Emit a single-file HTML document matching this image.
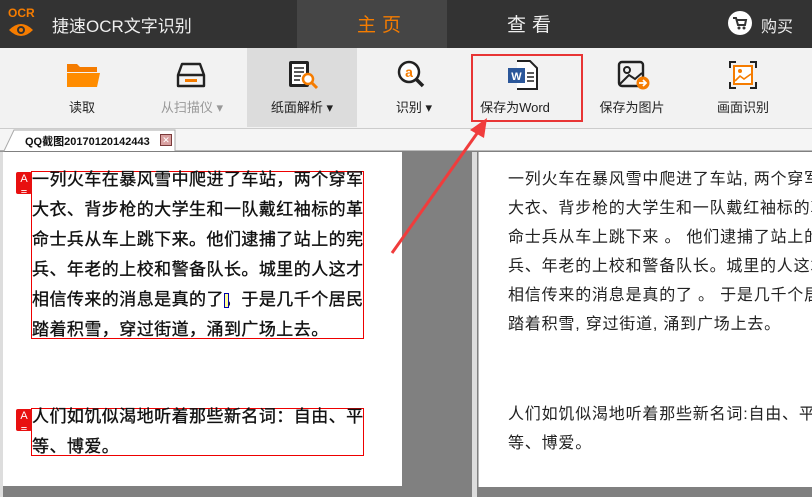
<!DOCTYPE html>
<html><head><meta charset="utf-8"><style>
*{margin:0;padding:0;box-sizing:border-box}
body{width:812px;height:497px;overflow:hidden;background:#808080;font-family:"Liberation Sans","Noto Sans CJK SC",sans-serif;position:relative}
.a{position:absolute}
.top{left:0;top:0;width:812px;height:48px;background:#333}
.lbl{font-size:13px;color:#222;text-align:center;width:110px;white-space:nowrap}
.lt{font-size:17px;color:#111;line-height:30px;white-space:nowrap;letter-spacing:0.45px;-webkit-text-stroke:0.35px #111}
.rt{font-size:16px;color:#222;line-height:29px;white-space:nowrap;letter-spacing:0.8px}
.ai{width:16px;height:22px;background:#e81010;border-radius:2px;color:#fff;font-size:11px;text-align:center;line-height:14px}
</style></head><body>
<div class="a top"></div>
<div class="a" style="left:297px;top:0;width:150px;height:48px;background:#454545"></div>
<div class="a" style="left:8px;top:6px;color:#f57c00;font-size:12px;font-weight:bold">OCR</div>
<svg class="a" style="left:8px;top:22px" width="26" height="16" viewBox="0 0 26 16"><path d="M1 8Q13 -4 25 8Q13 20 1 8Z" fill="#f57c00"/><circle cx="13" cy="8" r="4" fill="#333"/><circle cx="13" cy="8" r="2" fill="#f57c00"/></svg>
<div class="a" style="left:52px;top:12px;color:#eee;font-size:17px">捷速OCR文字识别</div>
<div class="a" style="left:357px;top:10px;color:#f57c00;font-size:19px;letter-spacing:6px">主页</div>
<div class="a" style="left:507px;top:10px;color:#eee;font-size:19px;letter-spacing:6px">查看</div>
<div class="a" style="left:728px;top:11px;width:24px;height:24px;border-radius:50%;background:#fff"></div>
<svg class="a" style="left:732px;top:15px" width="16" height="16" viewBox="0 0 16 16"><path d="M1 3H4L6 10H13L14 5H5" stroke="#333" stroke-width="2" fill="none"/><circle cx="7" cy="13" r="1.5" fill="#333"/><circle cx="12" cy="13" r="1.5" fill="#333"/></svg>
<div class="a" style="left:761px;top:13px;color:#eee;font-size:16px">购买</div>

<div class="a" style="left:0;top:48px;width:812px;height:80px;background:#f2f2f2"></div>
<div class="a" style="left:247px;top:48px;width:110px;height:79px;background:#dcdcdc"></div>
<svg class="a" style="left:67px;top:62px" width="33" height="26" viewBox="0 0 33 26"><path d="M0 2H10L13 5H30V10H0Z" fill="#f57c00"/><path d="M0 11H33L30 25H0Z" fill="#ff8c00"/></svg>
<svg class="a" style="left:176px;top:62px" width="30" height="26" viewBox="0 0 30 26"><path d="M6 2H24L28 13V24H2V13Z M2 13H28" stroke="#222" stroke-width="2.4" fill="none" stroke-linejoin="round"/><rect x="9" y="17" width="12" height="3" fill="#f57c00"/></svg>
<svg class="a" style="left:288px;top:60px" width="32" height="30" viewBox="0 0 32 30"><rect x="1" y="1" width="20" height="26" rx="2" fill="#222"/><rect x="4" y="4" width="14" height="20" fill="#fff"/><path d="M6 8H16M6 12H16M6 16H13M6 20H12" stroke="#222" stroke-width="1.5"/><circle cx="20" cy="19" r="5" stroke="#f57c00" stroke-width="2.5" fill="#fff"/><path d="M24 23L29 28" stroke="#f57c00" stroke-width="3"/></svg>
<svg class="a" style="left:397px;top:60px" width="30" height="30" viewBox="0 0 30 30"><circle cx="12" cy="12" r="10" stroke="#222" stroke-width="2.5" fill="#fff"/><path d="M19 19L26 26" stroke="#222" stroke-width="3.5"/><text x="12" y="17" text-anchor="middle" font-size="14" font-weight="bold" fill="#f57c00" font-family="Liberation Sans">a</text></svg>
<svg class="a" style="left:507px;top:60px" width="32" height="30" viewBox="0 0 32 30"><path d="M10 1H23L30 8V29H10" stroke="#222" stroke-width="2" fill="#fff"/><path d="M20 13H27M20 17H27M20 21H27" stroke="#222" stroke-width="1.6"/><rect x="1" y="8" width="17" height="15" fill="#2b579a"/><text x="9.5" y="20" text-anchor="middle" font-size="11" font-weight="bold" fill="#fff" font-family="Liberation Sans">W</text></svg>
<svg class="a" style="left:617px;top:60px" width="34" height="30" viewBox="0 0 34 30"><rect x="2" y="2" width="24" height="24" rx="3" stroke="#222" stroke-width="2.4" fill="none"/><circle cx="10" cy="10" r="3" stroke="#222" stroke-width="2" fill="none"/><path d="M3 24L12 15L18 19L25 13" stroke="#222" stroke-width="2" fill="none"/><circle cx="26" cy="23" r="6.5" fill="#f57c00"/><path d="M22 23H29M26 20L29 23L26 26" stroke="#fff" stroke-width="1.8" fill="none"/></svg>
<svg class="a" style="left:729px;top:61px" width="28" height="28" viewBox="0 0 28 28"><path d="M1 7V1H7M21 1H27V7M27 21V27H21M7 27H1V21" stroke="#222" stroke-width="2" fill="none"/><rect x="5" y="5" width="18" height="18" stroke="#f57c00" stroke-width="2" fill="#fff"/><circle cx="11" cy="10" r="2" fill="#f57c00"/><path d="M6 20L11 15L15 18L22 13" stroke="#f57c00" stroke-width="1.6" fill="none"/></svg>
<div class="a lbl" style="left:27px;top:97px">读取</div>
<div class="a lbl" style="left:137px;top:97px;color:#999">从扫描仪 ▾</div>
<div class="a lbl" style="left:247px;top:97px">纸面解析 ▾</div>
<div class="a lbl" style="left:359px;top:97px">识别 ▾</div>
<div class="a lbl" style="left:460px;top:97px">保存为Word</div>
<div class="a lbl" style="left:577px;top:97px">保存为图片</div>
<div class="a lbl" style="left:688px;top:97px">画面识别</div>
<div class="a" style="left:471px;top:54px;width:112px;height:68px;border:2px solid #e83535"></div>

<div class="a" style="left:0;top:128px;width:812px;height:23px;background:#f5f5f5;border-top:1px solid #ccc;border-bottom:1px solid #bbb"></div>
<svg class="a" style="left:0;top:129px" width="180" height="23"><path d="M0 22H4L14 1H175V22" fill="#fff" stroke="#aaa"/></svg>
<div class="a" style="left:25px;top:133px;font-size:11px;font-weight:bold;color:#111">QQ截图20170120142443</div>
<div class="a" style="left:160px;top:134px;width:12px;height:12px;background:#d9a0a0;border:1px solid #7a3a3a;font-size:9px;line-height:10px;text-align:center;color:#fff">✕</div>

<div class="a" style="left:3px;top:152px;width:399px;height:334px;background:#fff"></div>
<div class="a" style="left:0;top:152px;width:3px;height:345px;background:#ddd"></div>
<div class="a" style="left:472px;top:152px;width:5px;height:345px;background:#ddd"></div>
<div class="a" style="left:478px;top:152px;width:334px;height:335px;background:#fff;border-left:1px solid #bbb"></div>

<div class="a" style="left:31px;top:171px;width:333px;height:168px;border:1px solid #e00"></div>
<div class="a" style="left:31px;top:408px;width:333px;height:48px;border:1px solid #e00"></div>
<div class="a ai" style="left:16px;top:172px">A<br>≡</div>
<div class="a ai" style="left:16px;top:409px">A<br>≡</div>
<div class="a lt" style="left:32px;top:165px">一列火车在暴风雪中爬进了车站，两个穿军<br>大衣、背步枪的大学生和一队戴红袖标的革<br>命士兵从车上跳下来。他们逮捕了站上的宪<br>兵、年老的上校和警备队长。城里的人这才<br>相信传来的消息是真的了。于是几千个居民<br>踏着积雪，穿过街道，涌到广场上去。</div>
<div class="a" style="left:224px;top:293px;width:5px;height:15px;background:#ff9;border:1px solid #00a"></div>
<div class="a lt" style="left:32px;top:402px">人们如饥似渴地听着那些新名词：自由、平<br>等、博爱。</div>

<div class="a rt" style="left:508px;top:165px">一列火车在暴风雪中爬进了车站, 两个穿军<br>大衣、背步枪的大学生和一队戴红袖标的革<br>命士兵从车上跳下来 。 他们逮捕了站上的宪<br>兵、年老的上校和警备队长。城里的人这才<br>相信传来的消息是真的了 。 于是几千个居民<br>踏着积雪, 穿过街道, 涌到广场上去。</div>
<div class="a rt" style="left:508px;top:400px">人们如饥似渴地听着那些新名词:自由、平<br>等、博爱。</div>

<svg class="a" style="left:0;top:0" width="812" height="497"><path d="M392 253L478 132" stroke="#f03c3c" stroke-width="3"/><path d="M487 118L470 130L484 138Z" fill="#f03c3c"/></svg>
</body></html>
